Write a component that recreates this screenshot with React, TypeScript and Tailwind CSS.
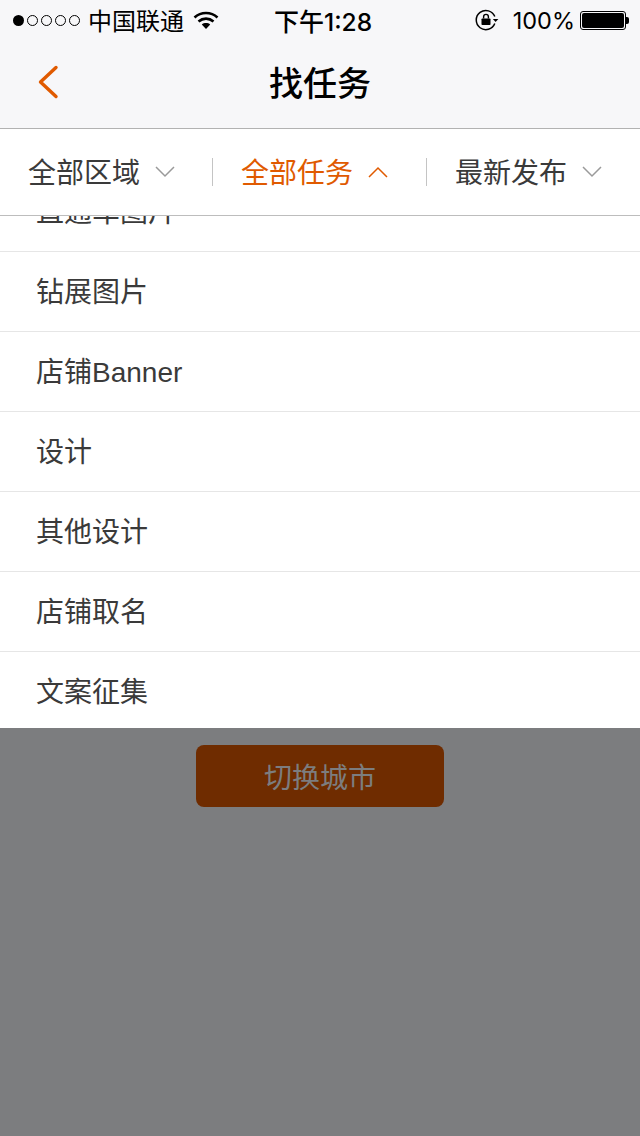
import React from 'react';

const CJK = "font-['Noto_Sans_CJK_SC','Noto_Sans',sans-serif]";

const categories = ['直通车图片', '钻展图片', '店铺Banner', '设计', '其他设计', '店铺取名', '文案征集'];

const SignalDots = () => (
  <div className="flex items-center gap-[3px]">
    <span className="w-[11px] h-[11px] rounded-full bg-black" />
    {[0, 1, 2, 3].map((i) => (
      <span key={i} className="w-[11px] h-[11px] rounded-full border border-black" />
    ))}
  </div>
);

const WifiIcon = () => (
  <svg width="26" height="20" viewBox="0 0 26 20" fill="none" stroke="#000" strokeWidth="2.6">
    <path d="M1.5 7.5C8 1.5 18 1.5 24.5 7.5" />
    <path d="M5.5 11.5C10 7.6 16 7.6 20.5 11.5" />
    <path d="M13 19l-4.2-4.6C11 12.6 15 12.6 17.2 14.4L13 19z" fill="#000" stroke="none" />
  </svg>
);

const RotationLock = () => (
  <svg width="24" height="24" viewBox="0 0 24 24" fill="none">
    <path d="M19.8 8.6A9.6 9.6 0 1 0 19.8 15.6" stroke="#000" strokeWidth="1.5" />
    <path d="M17.8 11h5.6l-2.8 3z" fill="#000" />
    <rect x="6.5" y="10.5" width="9" height="6.5" rx="0.8" fill="#000" />
    <path d="M8.6 10.5V8.8a2.4 2.4 0 0 1 4.8 0v1.7" stroke="#000" strokeWidth="1.4" />
  </svg>
);

const Battery = () => (
  <div className="flex items-center">
    <div className="w-[46px] h-[19px] rounded-[3px] border border-black p-[1px]">
      <div className="w-full h-full rounded-[2px] bg-black" />
    </div>
    <span className="w-[3px] h-[7px] rounded-r-[2px] bg-black" />
  </div>
);

const Chevron = ({ up, color }: { up?: boolean; color: string }) => (
  <svg width="20" height="12" viewBox="0 0 20 12" fill="none" stroke={color} strokeWidth="1.5">
    <path d={up ? 'M1 11L10 2l9 9' : 'M1 1l9 9 9-9'} />
  </svg>
);

const FilterTab = ({ label, active, divider }: { label: string; active?: boolean; divider?: boolean }) => (
  <div className="h-full flex items-center">
    <div className={`flex-1 h-[28px] flex items-center gap-[15px] ${divider ? 'pl-[28px] border-l border-[#c4c4c4]' : 'pl-[28px]'}`}>
      <span className={`text-[28px] leading-none -translate-y-[1px] ${active ? 'text-[#e05a00]' : 'text-[#3a3a3a]'}`}>{label}</span>
      <Chevron up={active} color={active ? '#e05a00' : '#9a9a9a'} />
    </div>
  </div>
);

const App: React.FC = () => {
  return (
    <div className={`w-[640px] h-[1136px] flex flex-col overflow-hidden bg-[#7c7d7f] ${CJK}`}>
      <header className="h-[129px] shrink-0 bg-[#f7f7f9] border-b border-[#b2b2b2]">
        {/* status bar */}
        <div className="relative h-[40px] flex items-center justify-between pl-[13px] pr-[11px]">
          <div className="flex items-center">
            <SignalDots />
            <span className="ml-[8px] text-[24px] leading-none text-black">中国联通</span>
            <span className="ml-[9px] flex"><WifiIcon /></span>
          </div>
          <span className="absolute left-[274px] top-[5px] text-[25px] leading-[30px] font-medium text-black">
            下午<span className="font-['Inter',sans-serif] text-[24.5px]">1:28</span>
          </span>
          <div className="flex items-center">
            <RotationLock />
            <span className="ml-[14px] mr-[5px] pt-[2px] text-[23.5px] leading-none text-black font-['Inter',sans-serif]">100%</span>
            <Battery />
          </div>
        </div>
        {/* nav bar */}
        <div className="relative h-[88px] flex items-center justify-center pb-[4px]">
          <svg className="absolute left-[37px] top-[25px]" width="22" height="36" viewBox="0 0 22 36" fill="none" stroke="#e05a00" strokeWidth="3.4" strokeLinecap="round" strokeLinejoin="round">
            <path d="M19 2.5L3.5 17 19 31.5" />
          </svg>
          <h1 className="text-[34px] leading-none font-medium text-black">找任务</h1>
        </div>
      </header>

      <div className="h-[87px] shrink-0 flex items-center bg-white border-b border-[#bdbdbd] pb-[1px]">
        <div className="w-[212px] h-full"><FilterTab label="全部区域" /></div>
        <div className="w-[214px] h-full"><FilterTab label="全部任务" active divider /></div>
        <div className="w-[214px] h-full"><FilterTab label="最新发布" divider /></div>
      </div>

      {/* dropdown list, scrolled so the first row is cut off */}
      <div className="h-[512px] shrink-0 overflow-hidden bg-white">
        <ul className="mt-[-44px]">
          {categories.map((name) => (
            <li key={name} className="h-[80px] flex items-center pl-[36px] pt-[2px] border-b border-[#e6e6e6] text-[28px] leading-none text-[#3a3a3a] font-['Liberation_Sans','Noto_Sans_CJK_SC',sans-serif]">
              {name}
            </li>
          ))}
        </ul>
      </div>

      <div className="flex justify-center pt-[17px]">
        <button className="w-[248px] h-[62px] rounded-[8px] bg-[#6f2c00] text-[28px] leading-none text-[#7c7d7f]">
          切换城市
        </button>
      </div>
    </div>
  );
};

export default App;
